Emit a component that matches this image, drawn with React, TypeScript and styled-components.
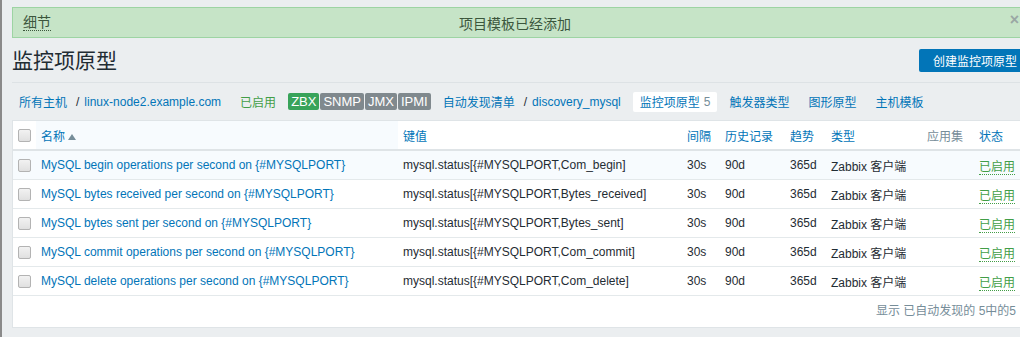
import styled, { createGlobalStyle } from "styled-components";

const GlobalStyle = createGlobalStyle`
  html, body {
    margin: 0;
    padding: 0;
    background: #ebeef0;
    overflow: hidden;
  }
  body {
    font-family: "Liberation Sans", Arial, "Noto Sans CJK SC", sans-serif;
    font-size: 12px;
    color: #1f2c33;
  }
`;

const items = [
  { name: "MySQL begin operations per second on {#MYSQLPORT}", key: "mysql.status[{#MYSQLPORT,Com_begin]" },
  { name: "MySQL bytes received per second on {#MYSQLPORT}", key: "mysql.status[{#MYSQLPORT,Bytes_received]" },
  { name: "MySQL bytes sent per second on {#MYSQLPORT}", key: "mysql.status[{#MYSQLPORT,Bytes_sent]" },
  { name: "MySQL commit operations per second on {#MYSQLPORT}", key: "mysql.status[{#MYSQLPORT,Com_commit]" },
  { name: "MySQL delete operations per second on {#MYSQLPORT}", key: "mysql.status[{#MYSQLPORT,Com_delete]" },
];

export default function App() {
  return (
    <>
      <GlobalStyle />
      <Page>
        <Message>
          <Details>细节</Details>
          <MessageText>项目模板已经添加</MessageText>
          <Close>×</Close>
        </Message>

        <Header>
          <Title>监控项原型</Title>
          <CreateButton>创建监控项原型</CreateButton>
        </Header>

        <Nav>
          <NavItem>
            <Link>所有主机</Link>
            <Slash>/</Slash>
            <Link>linux-node2.example.com</Link>
          </NavItem>
          <NavItem>
            <Green>已启用</Green>
          </NavItem>
          <Badges>
            <Badge $on>ZBX</Badge>
            <Badge>SNMP</Badge>
            <Badge>JMX</Badge>
            <Badge>IPMI</Badge>
          </Badges>
          <NavItem>
            <Link>自动发现清单</Link>
            <Slash>/</Slash>
            <Link>discovery_mysql</Link>
          </NavItem>
          <NavItem $selected>
            <Link>监控项原型</Link>
            <Count>5</Count>
          </NavItem>
          <NavItem>
            <Link>触发器类型</Link>
          </NavItem>
          <NavItem>
            <Link>图形原型</Link>
          </NavItem>
          <NavItem>
            <Link>主机模板</Link>
          </NavItem>
        </Nav>

        <TableBox>
          <Table>
            <colgroup>
              <col style={{ width: 23 }} />
              <col style={{ width: 362 }} />
              <col style={{ width: 284 }} />
              <col style={{ width: 38 }} />
              <col style={{ width: 65 }} />
              <col style={{ width: 41 }} />
              <col style={{ width: 96 }} />
              <col style={{ width: 52 }} />
              <col />
            </colgroup>
            <thead>
              <tr>
                <Th>
                  <Checkbox />
                </Th>
                <Th $sorted>
                  <Link>名称</Link>
                  <SortArrow />
                </Th>
                <Th><Link>键值</Link></Th>
                <Th><Link>间隔</Link></Th>
                <Th><Link>历史记录</Link></Th>
                <Th><Link>趋势</Link></Th>
                <Th><Link>类型</Link></Th>
                <Th $plain>应用集</Th>
                <Th><Link>状态</Link></Th>
              </tr>
            </thead>
            <tbody>
              {items.map((it, i) => (
                <Row key={it.name} $hover={i === 0}>
                  <Td>
                    <Checkbox />
                  </Td>
                  <Td><Link>{it.name}</Link></Td>
                  <Td>{it.key}</Td>
                  <Td>30s</Td>
                  <Td>90d</Td>
                  <Td>365d</Td>
                  <Td>Zabbix 客户端</Td>
                  <Td></Td>
                  <Td><Status>已启用</Status></Td>
                </Row>
              ))}
            </tbody>
          </Table>
          <Footer>显示 已自动发现的 5中的5</Footer>
        </TableBox>
      </Page>
    </>
  );
}

const Page = styled.div`
  width: 1018px;
  border-left: 2px solid #8a8a8a;
  padding: 7px 0 0 10px;
  min-height: 330px;
`;

const Message = styled.div`
  position: relative;
  height: 29px;
  display: flex;
  align-items: center;
  background: #c6e4c7;
  border: 1px solid #9dd4a3;
  color: #3b563c;
  font-size: 14px;
`;

const Details = styled.span`
  position: absolute;
  left: 10px;
  top: 6px;
  border-bottom: 1px dotted #3b563c;
  line-height: 16px;
`;

const MessageText = styled.span`
  flex: 1;
  text-align: center;
  padding-right: 12px;
`;

const Close = styled.span`
  position: absolute;
  right: 10px;
  top: 3px;
  color: #9aa7a4;
  font-size: 16px;
  font-weight: bold;
`;

const Header = styled.div`
  display: flex;
  align-items: center;
  justify-content: space-between;
  height: 43px;
  padding-top: 1px;
  border-bottom: 1px solid #dde2e5;
`;

const Title = styled.h1`
  margin: 0;
  font-size: 21px;
  font-weight: normal;
  color: #1f2c33;
  line-height: 24px;
`;

const CreateButton = styled.button`
  height: 23px;
  padding: 0 13px 0 14px;
  border: none;
  border-radius: 2px 0 0 2px;
  background: #0275b8;
  color: #fff;
  font-family: inherit;
  font-size: 12px;
  cursor: pointer;
`;

const Nav = styled.div`
  display: flex;
  align-items: center;
  gap: 5px;
  height: 37px;
`;

const NavItem = styled.div<{ $selected?: boolean }>`
  display: flex;
  align-items: center;
  height: 20px;
  padding: 0 7px;
  border-radius: 2px;
  background: ${(p) => (p.$selected ? "#fff" : "transparent")};
  white-space: nowrap;
`;

const Link = styled.span`
  color: #0275b8;
  cursor: pointer;
`;

const Slash = styled.span`
  color: #1f2c33;
  margin: 0 5px 0 9px;
`;

const Count = styled.span`
  color: #768d99;
  margin-left: 4px;
`;

const Green = styled.span`
  color: #429e47;
`;

const Badges = styled.div`
  display: flex;
  gap: 1px;
`;

const Badge = styled.span<{ $on?: boolean }>`
  height: 17px;
  line-height: 17px;
  padding: 0 3px;
  border-radius: 2px;
  color: #fff;
  font-size: 13px;
  background: ${(p) => (p.$on ? "#38a35a" : "#80898e")};
`;

const TableBox = styled.div`
  background: #fff;
  border: 1px solid #dfe4e7;
`;

const Table = styled.table`
  width: 100%;
  table-layout: fixed;
  border-collapse: collapse;
`;

const Th = styled.th<{ $sorted?: boolean; $plain?: boolean }>`
  height: 28px;
  padding: 0 0 0 5px;
  text-align: left;
  font-weight: normal;
  white-space: nowrap;
  border-bottom: 2px solid #dfe4e7;
  background: ${(p) => (p.$sorted ? "#f7fbfe" : "#fff")};
  color: ${(p) => (p.$plain ? "#768d99" : "#1f2c33")};
  vertical-align: middle;
`;

const Row = styled.tr<{ $hover?: boolean }>`
  background: ${(p) => (p.$hover ? "#f7fbfe" : "#fff")};
`;

const Td = styled.td`
  height: 28px;
  padding: 0 0 0 5px;
  white-space: nowrap;
  overflow: hidden;
  border-bottom: 1px solid #e4e9eb;
  vertical-align: middle;
`;

const Checkbox = styled.span`
  display: inline-block;
  width: 11px;
  height: 11px;
  border: 1px solid #b3b3b3;
  border-radius: 2px;
  background: linear-gradient(#f2f2f2, #e0e0e0);
  vertical-align: middle;
`;

const SortArrow = styled.span`
  display: inline-block;
  margin-left: 3px;
  width: 0;
  height: 0;
  border-left: 4px solid transparent;
  border-right: 4px solid transparent;
  border-bottom: 6px solid #768d99;
  vertical-align: 1px;
`;

const Status = styled.span`
  color: #429e47;
  border-bottom: 1px dotted #429e47;
  cursor: pointer;
`;

const Footer = styled.div`
  height: 31px;
  line-height: 31px;
  text-align: right;
  padding-right: 13px;
  color: #768d99;
`;
